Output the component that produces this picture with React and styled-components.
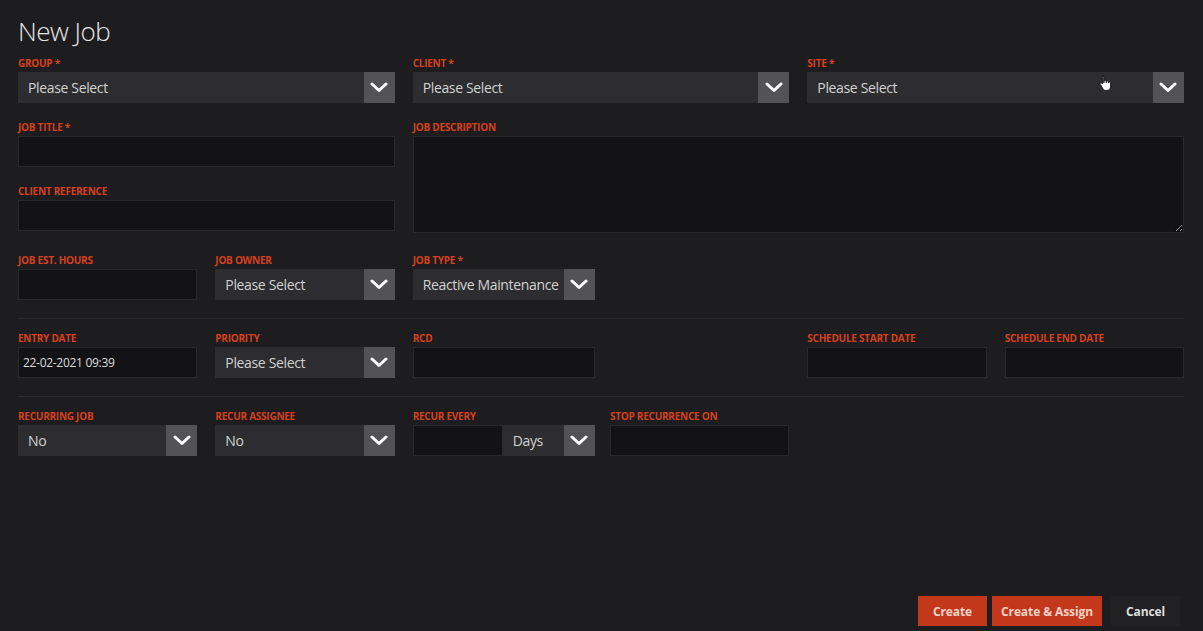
import React from "react";
import styled, { createGlobalStyle } from "styled-components";

const GlobalStyle = createGlobalStyle`
  html, body {
    margin: 0;
    padding: 0;
    background: #1d1c1f;
    font-family: "Open Sans", "Liberation Sans", sans-serif;
  }
  * { box-sizing: border-box; }
`;

const Chevron = () => (
  <svg width="18" height="11" viewBox="0 0 18 11" fill="none">
    <polyline points="2,2 9,8.5 16,2" stroke="#fff" strokeWidth="3" strokeLinecap="round" strokeLinejoin="round" />
  </svg>
);

const HandCursor = () => (
  <svg width="13" height="16" viewBox="0 0 13 16">
    <path
      d="M3.5 1.2c.7 0 1.2.5 1.2 1.2v5.3l.4-.1V6.2c0-.6.5-1 1-1s1 .4 1 1v1.3h.3V6.8c0-.6.5-1 1-1s1 .4 1 1v1h.3c0-.6.4-.9.9-.9s1 .4 1 1v3.6c0 1.9-1.3 3.9-3.5 3.9H6.6c-1.2 0-2-.6-2.6-1.6L1.3 9.5c-.4-.6-.2-1.2.3-1.5s1.1-.1 1.5.4l.3.5V2.4c0-.7.5-1.2 1.1-1.2z"
      fill="#fff"
      stroke="#111"
      strokeWidth="0.9"
    />
  </svg>
);

function Select({ value, width }) {
  return (
    <SelectBox $width={width}>
      <SelectValue>{value}</SelectValue>
      <ArrowBox>
        <Chevron />
      </ArrowBox>
    </SelectBox>
  );
}

function Field({ label, span, col, children }) {
  return (
    <FieldWrap $span={span} $col={col}>
      <Label>{label}</Label>
      {children}
    </FieldWrap>
  );
}

export default function App() {
  return (
    <>
      <GlobalStyle />
      <Page>
        <Title>New Job</Title>

        <Section>
          <Field label="Group *" span={2}>
            <Select value="Please Select" />
          </Field>
          <Field label="Client *" span={2}>
            <Select value="Please Select" />
          </Field>
          <Field label="Site *" span={2}>
            <CursorHolder>
              <Select value="Please Select" />
              <Cursor>
                <HandCursor />
              </Cursor>
            </CursorHolder>
          </Field>

          <Stack>
            <Field label="Job Title *">
              <Input />
            </Field>
            <Field label="Client Reference">
              <Input />
            </Field>
          </Stack>
          <Field label="Job Description" span={4}>
            <TextArea />
          </Field>

          <Field label="Job Est. Hours">
            <Input />
          </Field>
          <Field label="Job Owner">
            <Select value="Please Select" />
          </Field>
          <Field label="Job Type *">
            <Select value="Reactive Maintenance" width="calc(100% + 3px)" />
          </Field>
        </Section>

        <Section>
          <Field label="Entry Date">
            <Input>22-02-2021 09:39</Input>
          </Field>
          <Field label="Priority">
            <Select value="Please Select" />
          </Field>
          <Field label="RCD">
            <Input $width="calc(100% + 3px)" />
          </Field>
          <Field label="Schedule Start Date" col="5 / 6">
            <Input />
          </Field>
          <Field label="Schedule End Date">
            <Input />
          </Field>
        </Section>

        <Section $last>
          <Field label="Recurring Job">
            <Select value="No" />
          </Field>
          <Field label="Recur Assignee">
            <Select value="No" />
          </Field>
          <Field label="Recur Every">
            <Combo>
              <Input $width="90px" />
              <Select value="Days" width="auto" />
            </Combo>
          </Field>
          <Field label="Stop Recurrence On">
            <Input />
          </Field>
        </Section>

        <Footer>
          <Button $primary>Create</Button>
          <Button $primary>Create &amp; Assign</Button>
          <Button $gap>Cancel</Button>
        </Footer>
      </Page>
    </>
  );
}

const Page = styled.div`
  min-height: 100vh;
  display: flex;
  flex-direction: column;
  padding: 15px 19px 5px 18px;
`;

const Title = styled.h1`
  margin: 0 0 10px;
  font-size: 26px;
  line-height: 32px;
  font-weight: 300;
  letter-spacing: -0.5px;
  color: #e6e6e6;
`;

const Section = styled.div`
  display: grid;
  grid-template-columns: repeat(6, 1fr);
  align-items: start;
  column-gap: 18px;
  row-gap: 18px;
  padding-bottom: 18px;
  border-bottom: ${(p) => (p.$last ? "none" : "1px solid #2b2b2d")};
  & + & {
    padding-top: 13px;
  }
`;

const Stack = styled.div`
  grid-column: span 2;
  display: flex;
  flex-direction: column;
  gap: 18px;
`;

const FieldWrap = styled.div`
  display: flex;
  flex-direction: column;
  min-width: 0;
  grid-column: ${(p) => p.$col || (p.$span ? `span ${p.$span}` : "auto")};
`;

const Label = styled.div`
  font-size: 10px;
  line-height: 13px;
  font-weight: 700;
  text-transform: uppercase;
  letter-spacing: -0.25px;
  color: #d6411c;
  margin-bottom: 2px;
  white-space: nowrap;
`;

const SelectBox = styled.div`
  display: flex;
  height: 31px;
  flex: none;
  width: ${(p) => p.$width || "100%"};
  background: #2d2d2f;
  min-width: 0;
`;

const SelectValue = styled.div`
  flex: 1;
  min-width: 0;
  display: flex;
  align-items: center;
  padding-left: 10px;
  padding-right: 6px;
  font-size: 14px;
  letter-spacing: -0.35px;
  color: #d2d2d2;
  white-space: nowrap;
  overflow: hidden;
`;

const ArrowBox = styled.div`
  width: 31px;
  flex: none;
  display: flex;
  align-items: center;
  justify-content: center;
  background: #535355;
`;

const Input = styled.div`
  height: 31px;
  flex: none;
  width: ${(p) => p.$width || "100%"};
  background: #131315;
  border: 1px solid #29292b;
  display: flex;
  align-items: center;
  padding-left: 4px;
  font-size: 12px;
  letter-spacing: -0.3px;
  color: #dcdcdc;
`;

const TextArea = styled.textarea`
  flex: none;
  height: 97px;
  margin: 0 0 3px;
  background: #131315;
  border: 1px solid #29292b;
  resize: vertical;
  outline: none;
  color: #dcdcdc;
  font-family: inherit;
`;

const Combo = styled.div`
  display: flex;
  width: calc(100% + 3px);
  & > ${SelectBox} {
    flex: 1;
  }
`;

const CursorHolder = styled.div`
  position: relative;
  display: flex;
`;

const Cursor = styled.div`
  position: absolute;
  left: 292px;
  top: 3px;
  line-height: 0;
`;

const Footer = styled.div`
  margin-top: auto;
  display: flex;
  justify-content: flex-end;
  gap: 5px;
  padding-right: 4px;
`;

const Button = styled.button`
  height: 30px;
  padding: 0 9px;
  min-width: 69px;
  border: none;
  background: ${(p) => (p.$primary ? "#c3381a" : "#212123")};
  color: ${(p) => (p.$primary ? "#f3d3c8" : "#dedede")};
  font-family: "Open Sans", "Liberation Sans", sans-serif;
  font-size: 12px;
  font-weight: 700;
  letter-spacing: -0.1px;
  margin-left: ${(p) => (p.$gap ? "4px" : "0")};
  cursor: pointer;
`;
